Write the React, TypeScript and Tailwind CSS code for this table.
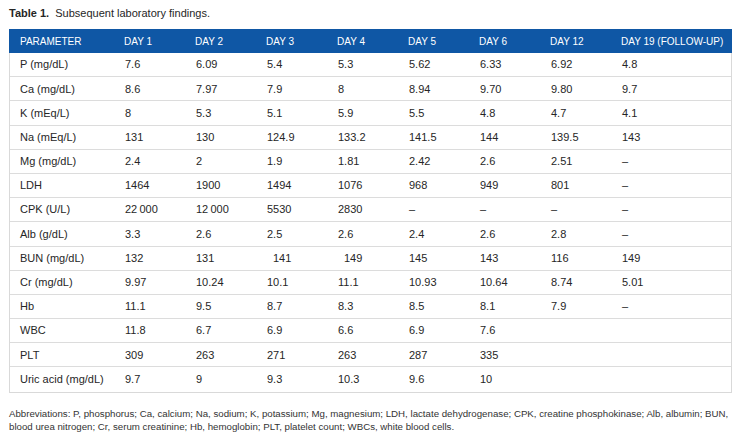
const columns = ["PARAMETER", "DAY 1", "DAY 2", "DAY 3", "DAY 4", "DAY 5", "DAY 6", "DAY 12", "DAY 19 (FOLLOW-UP)"]

// a leading ">" marks a value that sits a few pixels right in the source
const rows: string[][] = [
  ["P (mg/dL)", "7.6", "6.09", "5.4", "5.3", "5.62", "6.33", "6.92", "4.8"],
  ["Ca (mg/dL)", "8.6", "7.97", "7.9", "8", "8.94", "9.70", "9.80", "9.7"],
  ["K (mEq/L)", "8", "5.3", "5.1", "5.9", "5.5", "4.8", "4.7", "4.1"],
  ["Na (mEq/L)", "131", "130", "124.9", "133.2", "141.5", "144", "139.5", "143"],
  ["Mg (mg/dL)", "2.4", "2", "1.9", "1.81", "2.42", "2.6", "2.51", "–"],
  ["LDH", "1464", "1900", "1494", "1076", "968", "949", "801", "–"],
  ["CPK (U/L)", "22\u2009000", "12\u2009000", "5530", "2830", "–", "–", "–", "–"],
  ["Alb (g/dL)", "3.3", "2.6", "2.5", "2.6", "2.4", "2.6", "2.8", "–"],
  ["BUN (mg/dL)", "132", "131", ">141", ">149", "145", "143", "116", "149"],
  ["Cr (mg/dL)", "9.97", "10.24", "10.1", "11.1", "10.93", "10.64", "8.74", "5.01"],
  ["Hb", "11.1", "9.5", "8.7", "8.3", "8.5", "8.1", "7.9", "–"],
  ["WBC", "11.8", "6.7", "6.9", "6.6", "6.9", "7.6", "", ""],
  ["PLT", "309", "263", "271", "263", "287", "335", "", ""],
  ["Uric acid (mg/dL)", "9.7", "9", "9.3", "10.3", "9.6", "10", "", ""],
]

const grid = "grid grid-cols-[105px_repeat(7,71px)_121px]"

function Cell({ value }: { value: string }) {
  const shifted = value.startsWith(">")
  return (
    <div className={shifted ? "pl-[16px]" : "pl-[10px]"}>{shifted ? value.slice(1) : value}</div>
  )
}

export default function App() {
  return (
    <div className="min-h-screen bg-white font-['Liberation_Sans',Arial,sans-serif] text-[#262626]">
      <div className="pl-[9px] pt-[6px]">
        <p className="text-[11px] leading-[14px]">
          <span className="font-bold">Table 1.</span>&nbsp; Subsequent laboratory findings.
        </p>

        <div className="mt-[9px] w-[723px] border-x border-b border-[#d9d9d9]">
          <div className={`${grid} -mx-px h-[24px] items-center bg-[#0f57a5] text-[10px] text-white`}>
            {columns.map((c) => (
              <div key={c} className="pl-[10px] first:pl-[11px]">
                {c}
              </div>
            ))}
          </div>
          {rows.map((r) => (
            <div
              key={r[0]}
              className={`${grid} h-[24.2px] items-center border-b border-[#dcdcdc] text-[11px] last:border-b-0`}
            >
              {r.map((v, i) => (
                <Cell key={i} value={v} />
              ))}
            </div>
          ))}
        </div>

        <p className="mt-[14px] w-[732px] whitespace-nowrap text-[9.7px] leading-[13px] text-[#333]">
          Abbreviations: P, phosphorus; Ca, calcium; Na, sodium; K, potassium; Mg, magnesium; LDH, lactate
          dehydrogenase; CPK, creatine phosphokinase; Alb, albumin; BUN,
          <br />
          blood urea nitrogen; Cr, serum creatinine; Hb, hemoglobin; PLT, platelet count; WBCs, white blood cells.
        </p>
      </div>
    </div>
  )
}
